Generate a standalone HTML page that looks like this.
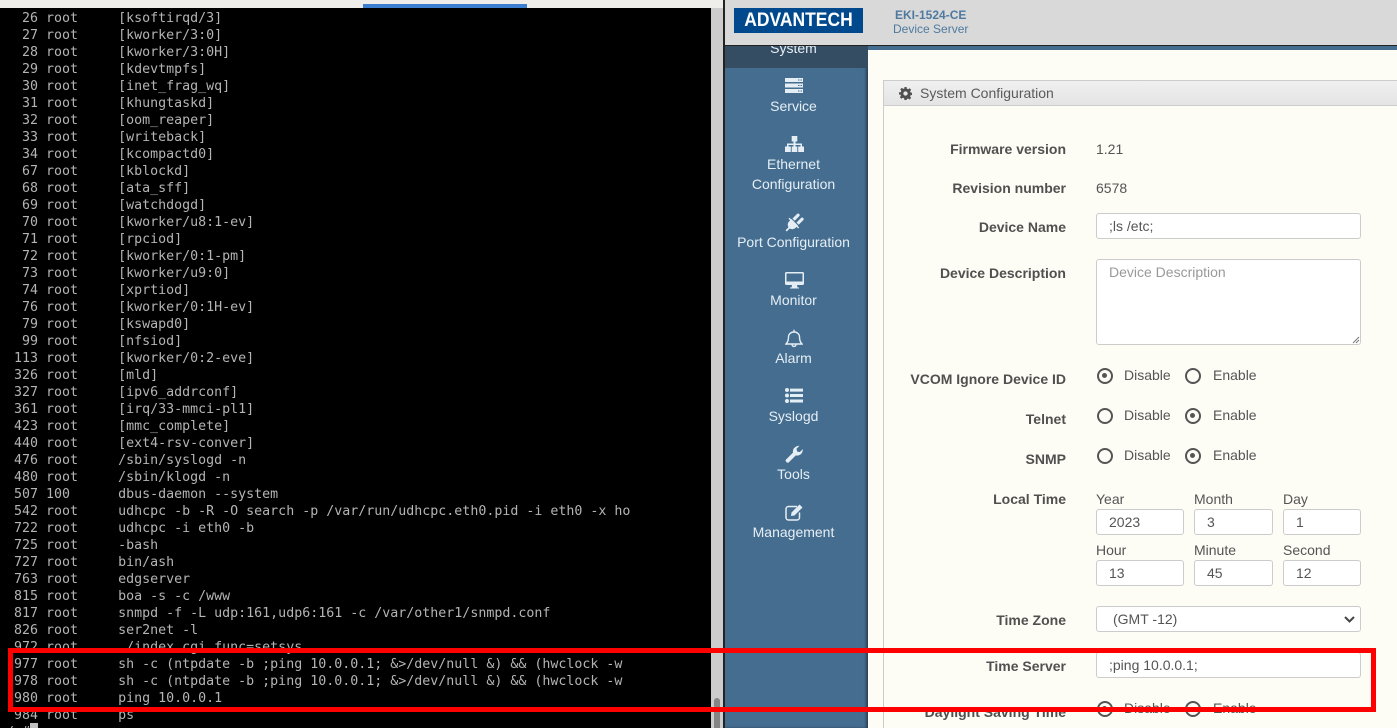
<!DOCTYPE html>
<html><head><meta charset="utf-8"><style>
html,body{margin:0;padding:0;width:1397px;height:728px;overflow:hidden;background:#f0eeeb}
*{box-sizing:border-box}
.a{position:absolute}
#wrap{position:relative;width:1397px;height:728px;overflow:hidden}
#term{left:0;top:8px;width:711px;height:720px;background:#000;overflow:hidden}
#term pre{position:absolute;left:6px;top:0;margin:0;padding-top:2px;font:13.3px/17px "DejaVu Sans Mono","Liberation Mono",monospace;color:#b4b4b4}
#side{left:725px;top:46px;width:143px;height:682px;background:#446d8f;box-shadow:inset -2px 0 2px #2c4257;overflow:hidden;font:14px/20px "Liberation Sans",sans-serif;color:#e6eef5;text-align:center}
#side div{position:absolute;left:0;width:137px}
#side svg{position:absolute}
#main{left:868px;top:46px;width:529px;height:682px;background:#fdfcf5;overflow:hidden;font:14px/20px "Liberation Sans",sans-serif;color:#555}
.l{position:absolute;right:331px;font-weight:bold;color:#505050;white-space:nowrap;line-height:20px}
.t{position:absolute;white-space:nowrap;line-height:20px}
.i{position:absolute;background:#fff;border:1px solid #ccc;border-radius:3px;line-height:25px;padding-left:12px;color:#555;white-space:nowrap}
.r{position:absolute;width:16px;height:16px;margin:-.5px;border:2px solid #555;border-radius:50%;background:#fdfcf5}
.r.c::after{content:"";position:absolute;left:3.5px;top:3.5px;width:5px;height:5px;background:#555;border-radius:50%}
</style></head><body><div id="wrap">
<div class="a" style="left:363px;top:4px;width:164px;height:4px;background:#3d7fd0"></div>
<div class="a" id="term"><pre>  26 root     [ksoftirqd/3]
  27 root     [kworker/3:0]
  28 root     [kworker/3:0H]
  29 root     [kdevtmpfs]
  30 root     [inet_frag_wq]
  31 root     [khungtaskd]
  32 root     [oom_reaper]
  33 root     [writeback]
  34 root     [kcompactd0]
  67 root     [kblockd]
  68 root     [ata_sff]
  69 root     [watchdogd]
  70 root     [kworker/u8:1-ev]
  71 root     [rpciod]
  72 root     [kworker/0:1-pm]
  73 root     [kworker/u9:0]
  74 root     [xprtiod]
  76 root     [kworker/0:1H-ev]
  79 root     [kswapd0]
  99 root     [nfsiod]
 113 root     [kworker/0:2-eve]
 326 root     [mld]
 327 root     [ipv6_addrconf]
 361 root     [irq/33-mmci-pl1]
 423 root     [mmc_complete]
 440 root     [ext4-rsv-conver]
 476 root     /sbin/syslogd -n
 480 root     /sbin/klogd -n
 507 100      dbus-daemon --system
 542 root     udhcpc -b -R -O search -p /var/run/udhcpc.eth0.pid -i eth0 -x ho
 722 root     udhcpc -i eth0 -b
 725 root     -bash
 727 root     bin/ash
 763 root     edgserver
 815 root     boa -s -c /www
 817 root     snmpd -f -L udp:161,udp6:161 -c /var/other1/snmpd.conf
 826 root     ser2net -l
 972 root     ./index.cgi func=setsys
 977 root     sh -c (ntpdate -b ;ping 10.0.0.1; &amp;&gt;/dev/null &amp;) &amp;&amp; (hwclock -w
 978 root     sh -c (ntpdate -b ;ping 10.0.0.1; &amp;&gt;/dev/null &amp;) &amp;&amp; (hwclock -w
 980 root     ping 10.0.0.1
 984 root     ps
/ # </pre><div class="a" style="left:30px;top:715px;width:8px;height:5px;background:#c0c0c0"></div></div>
<div class="a" style="left:711px;top:8px;width:12px;height:720px;background:#ccc"></div>
<div class="a" style="left:714px;top:698px;width:6px;height:30px;background:#858585;border-radius:3px 3px 0 0"></div>
<div class="a" style="left:723px;top:0;width:2px;height:728px;background:#222"></div>

<div class="a" id="side">
<div style="top:-46px;width:143px;height:68px;background:#344d63"></div>
<div style="top:-8px;line-height:20px">System</div>
<svg style="left:60px;top:32px" width="18" height="16" viewBox="0 0 18 16" fill="#e6eef5"><path d="M0 0h18v4H0zM0 5.500h18v4H0zM0 11h18v4H0z"/><path d="M13 1.500h1.500v1H13zM15.500 1.500H17v1h-1.500zM13 7h1.500v1H13zM15.500 7H17v1h-1.500zM13 12.500h1.500v1H13zM15.500 12.500H17v1h-1.500z" fill="#446d8f"/></svg>
<div style="top:50px">Service</div>
<svg style="left:60px;top:90px" width="19" height="16" viewBox="0 0 19 16" fill="#e6eef5"><path d="M6.700 0h5.600v5.500H6.700zM0 10.500h5.800V16H0zM6.700 10.500h5.600V16H6.700zM13.200 10.500H19V16h-5.800z"/><path d="M8.500 5h2v2.500H17v3h-1.500V9h-5v1.500h-2V9h-5v1.500H2v-3h6.500z"/></svg>
<div style="top:108px">Ethernet</div><div style="top:128px">Configuration</div>
<svg style="left:60px;top:167px" width="19" height="19" viewBox="0 0 19 19" fill="#e6eef5"><path d="M.5 17.200L3.500 14.200C2.200 12 2.600 9.800 4.500 8L6.500 6L13 12.500L11 14.500C9 16.400 6.800 16.700 4.800 15.500L1.800 18.500z"/><path d="M4.500 4.800L14.200 14.500L13.200 15.500L3.500 5.800z"/><path d="M7.500 5.500L12 1a1.500 1.500 0 0 1 2.200 2.200L9.700 7.700zM11.500 9.500L16 5a1.500 1.500 0 0 1 2.200 2.200L13.700 11.700z"/></svg>
<div style="top:186px">Port Configuration</div>
<svg style="left:60px;top:226px" width="19" height="17" viewBox="0 0 19 17"><path d="M1.500 0h16A1.500 1.500 0 0 1 19 1.500v10a1.500 1.500 0 0 1-1.500 1.500h-16A1.500 1.500 0 0 1 0 11.500v-10A1.500 1.500 0 0 1 1.500 0zM1.500 1.500v8h16v-8zM7 13h5l.5 2.500h1.500v1H5v-1h1.500z" fill="#e6eef5" fill-rule="evenodd"/></svg>
<div style="top:244px">Monitor</div>
<svg style="left:60px;top:283px" width="18" height="19" viewBox="0 0 18 19" fill="none" stroke="#e6eef5" stroke-width="1.400"><path d="M1 15c2-2 2.500-4 2.500-7C3.500 5 6 3 9 3s5.500 2 5.500 5c0 3 .5 5 2.500 7z"/><path d="M9 3V.8M7 15.500c0 2.500 4 2.500 4 0"/></svg>
<div style="top:302px">Alarm</div>
<svg style="left:60px;top:342px" width="18" height="15" viewBox="0 0 18 15" fill="#e6eef5"><circle cx="2" cy="2" r="2"/><circle cx="2" cy="7.500" r="2"/><circle cx="2" cy="13" r="2"/><path d="M5 .6h13v3H5zM5 6h13v3H5zM5 11.500h13v3H5z"/></svg>
<div style="top:360px">Syslogd</div>
<svg style="left:60px;top:399px" width="18" height="18" viewBox="0 0 18 18" fill="#e6eef5"><path d="M.8 14.800L8 7.600C7.300 4.500 9.800.8 14.500.8l-3 3 .6 2.700 2.700.6 3-3c.3 4.300-3.500 7.200-7 6.300l-7 7c-1.400 1.200-3.900-1.100-3-2.600z"/></svg>
<div style="top:418px">Tools</div>
<svg style="left:60px;top:457px" width="19" height="18" viewBox="0 0 19 18"><path d="M12 3.500H3.500A2.500 2.500 0 0 0 1 6v8.500A2.500 2.500 0 0 0 3.500 17h8.500a2.500 2.500 0 0 0 2.500-2.500V9.500" fill="none" stroke="#e6eef5" stroke-width="1.500"/><path d="M6.500 9.500L14.500 1.500l3 3-8 8-3.500.5z" fill="#e6eef5"/></svg>
<div style="top:476px">Management</div>
</div>

<div class="a" id="main">
<div class="a" style="left:0;top:0;width:529px;height:4px;background:#446d8f"></div>
<div class="a" style="left:15px;top:34px;width:514px;height:648px;border-left:1px solid #ccc"></div>
<div class="a" style="left:15px;top:34px;width:514px;height:26px;background:linear-gradient(#f0f0f0,#e4e4e4);border:1px solid #ccc;border-right:0"></div>
<svg class="a" style="left:31px;top:41px" width="13" height="13" viewBox="0 0 24 24" fill="#505050"><path fill-rule="evenodd" d="M10 0h4l.6 3.300 2.200.9L19.600 2.300l2.800 2.800-1.900 2.800.9 2.200 3.300.6v4l-3.300.6-.9 2.200 1.900 2.800-2.800 2.800-2.800-1.900-2.200.9L14 24h-4l-.6-3.300-2.200-.9-2.800 1.900-2.800-2.800 1.900-2.800-.9-2.200L0 14v-4l3.300-.6.9-2.200-1.900-2.800 2.800-2.800 2.800 1.900 2.200-.9zM12 8a4 4 0 1 0 0 8 4 4 0 0 0 0-8z"/></svg>
<div class="t" style="left:52px;top:37px;color:#5a5a5a">System Configuration</div>

<div class="l" style="top:93px">Firmware version</div><div class="t" style="left:228px;top:93px">1.21</div>
<div class="l" style="top:132px">Revision number</div><div class="t" style="left:228px;top:132px">6578</div>
<div class="l" style="top:171px">Device Name</div><div class="i" style="left:228px;top:167px;width:265px;height:26px">;ls /etc;</div>
<div class="l" style="top:217px">Device Description</div>
<div class="i" style="left:228px;top:213px;width:265px;height:86px;color:#999;line-height:24px">Device Description</div>
<svg class="a" style="left:484px;top:290px" width="8" height="8" viewBox="0 0 8 8" stroke="#777"><path d="M1 7l6-6M4 7l3-3"/></svg>

<div class="l" style="top:323px">VCOM Ignore Device ID</div>
<div class="r c" style="left:229px;top:322px"></div><div class="t" style="left:256px;top:319px">Disable</div>
<div class="r" style="left:317px;top:322px"></div><div class="t" style="left:345px;top:319px">Enable</div>
<div class="l" style="top:363px">Telnet</div>
<div class="r" style="left:229px;top:362px"></div><div class="t" style="left:256px;top:359px">Disable</div>
<div class="r c" style="left:317px;top:362px"></div><div class="t" style="left:345px;top:359px">Enable</div>
<div class="l" style="top:403px">SNMP</div>
<div class="r" style="left:229px;top:402px"></div><div class="t" style="left:256px;top:399px">Disable</div>
<div class="r c" style="left:317px;top:402px"></div><div class="t" style="left:345px;top:399px">Enable</div>

<div class="l" style="top:443px">Local Time</div>
<div class="t" style="left:228px;top:443px">Year</div><div class="t" style="left:326px;top:443px">Month</div><div class="t" style="left:415px;top:443px">Day</div>
<div class="i" style="left:228px;top:463px;width:88px;height:26px">2023</div>
<div class="i" style="left:326px;top:463px;width:79px;height:26px">3</div>
<div class="i" style="left:415px;top:463px;width:78px;height:26px">1</div>
<div class="t" style="left:228px;top:494px">Hour</div><div class="t" style="left:326px;top:494px">Minute</div><div class="t" style="left:415px;top:494px">Second</div>
<div class="i" style="left:228px;top:514px;width:88px;height:26px">13</div>
<div class="i" style="left:326px;top:514px;width:79px;height:26px">45</div>
<div class="i" style="left:415px;top:514px;width:78px;height:26px">12</div>

<div class="l" style="top:564px">Time Zone</div>
<div class="i" style="left:228px;top:560px;width:265px;height:26px;padding-left:16px">(GMT -12)</div>
<svg class="a" style="left:476px;top:570px" width="11" height="7" viewBox="0 0 11 7" fill="none" stroke="#444" stroke-width="2"><path d="M1 1l4.500 4.500L10 1"/></svg>
<div class="l" style="top:610px">Time Server</div>
<div class="i" style="left:228px;top:606px;width:265px;height:26px">;ping 10.0.0.1;</div>
<div class="l" style="top:656px">Daylight Saving Time</div>
<div class="r c" style="left:229px;top:655px"></div><div class="t" style="left:256px;top:652px">Disable</div>
<div class="r" style="left:317px;top:655px"></div><div class="t" style="left:345px;top:652px">Enable</div>
</div>

<div class="a" style="left:725px;top:0;width:672px;height:46px;background:#d9d9d9;border-bottom:1px solid #222"></div>
<div class="a" style="left:734px;top:8px;width:129px;height:25px;background:#00498d"></div>
<div class="a" style="left:734px;top:8px;width:129px;height:25px;color:#fff;font:bold 19px/26px 'Liberation Sans',sans-serif;text-align:center;white-space:nowrap;transform:scaleX(.92)">ADVANTECH</div>
<div class="a" style="left:895px;top:8px;font:bold 12px/14px 'Liberation Sans',sans-serif;color:#4f7aa0;white-space:nowrap">EKI-1524-CE</div>
<div class="a" style="left:893px;top:22px;font:12px/14px 'Liberation Sans',sans-serif;color:#4f7aa0;white-space:nowrap">Device Server</div>

<div class="a" style="left:8px;top:648px;width:1368px;height:64px;border:5px solid #f00"></div>
</div></body></html>
